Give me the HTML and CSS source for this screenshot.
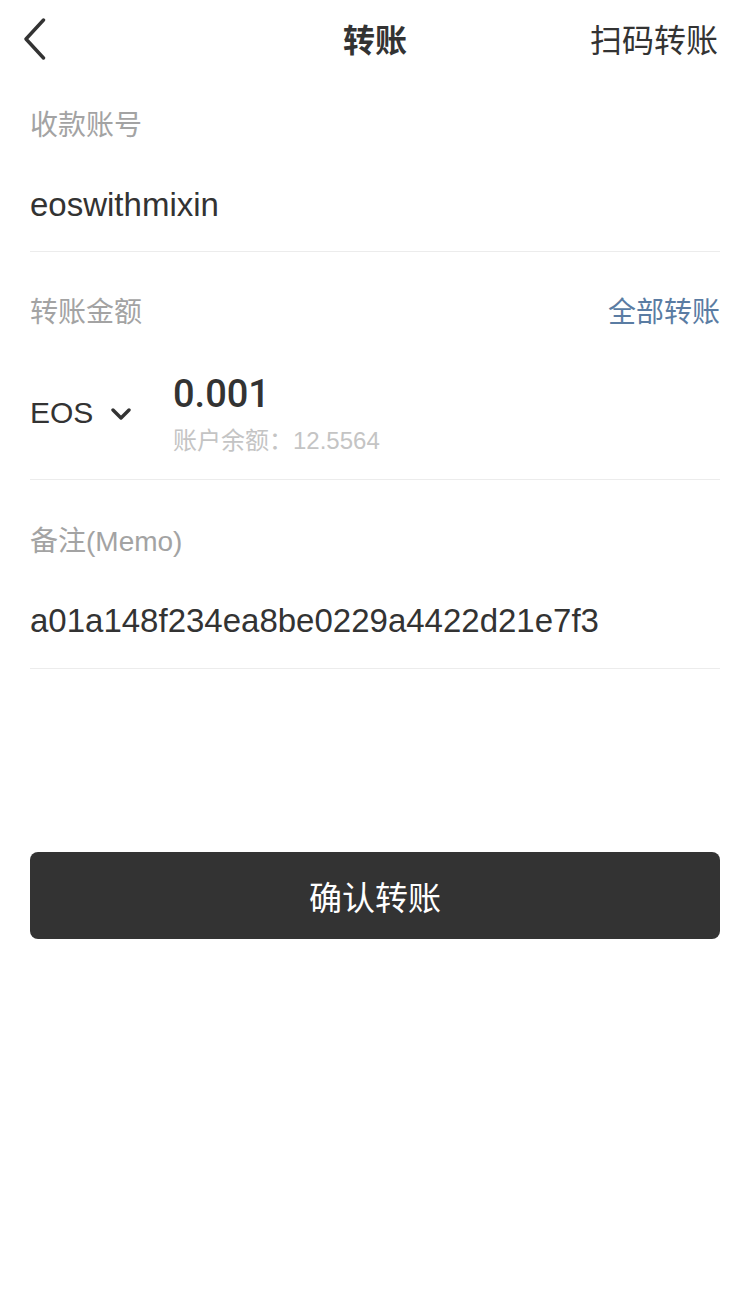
FILE: index.html
```html
<!DOCTYPE html>
<html lang="zh-CN">
<head>
<meta charset="utf-8">
<title>转账</title>
<link rel="stylesheet" href="styles.css">
</head>
<body>
<div class="page">
  <header class="header">
    <span class="back">
      <svg width="24" height="44" viewBox="0 0 24 44"><polyline points="20.5,4 3,23 20.5,42" fill="none" stroke="#333" stroke-width="3.4" stroke-linecap="round" stroke-linejoin="round"/></svg>
    </span>
    <h1 class="title">转账</h1>
    <span class="scan">扫码转账</span>
  </header>

  <section class="field">
    <div class="label-row"><span class="label">收款账号</span></div>
    <div class="value">eoswithmixin</div>
  </section>

  <section class="field">
    <div class="label-row"><span class="label">转账金额</span><span class="link">全部转账</span></div>
    <div class="amount-row">
      <div class="coin">
        <span class="coin-name">EOS</span>
        <svg class="caret" width="20" height="14" viewBox="0 0 20 14"><polyline points="2,3 10,11 18,3" fill="none" stroke="#333" stroke-width="3.4" stroke-linecap="round" stroke-linejoin="round"/></svg>
      </div>
      <div class="amount-col">
        <div class="amount">0.001</div>
        <div class="balance">账户余额：12.5564</div>
      </div>
    </div>
  </section>

  <section class="field memo">
    <div class="label-row"><span class="label">备注(Memo)</span></div>
    <div class="value">a01a148f234ea8be0229a4422d21e7f3</div>
  </section>

  <button class="submit">确认转账</button>
</div>
</body>
</html>
```

FILE: styles.css
```css
html, body {
  margin: 0;
  padding: 0;
  background: #fff;
}
body {
  font-family: "Liberation Sans", "Noto Sans CJK SC", sans-serif;
  color: #333;
}
.page {
  width: 750px;
  display: flex;
  flex-direction: column;
}
.header {
  height: 76px;
  display: flex;
  align-items: center;
  justify-content: space-between;
  padding: 0 32px 0 23px;
  position: relative;
}
.back {
  display: flex;
  align-items: center;
  width: 24px;
  height: 44px;
  margin-top: -1px;
}
.title {
  position: absolute;
  left: 0;
  right: 0;
  top: 0;
  height: 76px;
  margin: 0;
  display: flex;
  align-items: center;
  justify-content: center;
  font-size: 32px;
  font-weight: 700;
  color: #333;
  pointer-events: none;
  font-family: "Noto Sans CJK SC", sans-serif;
}
.scan {
  font-size: 32px;
  line-height: 40px;
  color: #333;
  font-family: "Noto Sans CJK SC", sans-serif;
}
.field {
  margin: 0 30px;
  padding-top: 27px;
  padding-bottom: 24px;
  border-bottom: 1px solid #ececec;
}
.field + .field {
  padding-top: 38px;
  padding-bottom: 23px;
}
.field.memo {
  padding-top: 39px;
  padding-bottom: 25px;
}
.label-row {
  height: 40px;
  display: flex;
  align-items: center;
  justify-content: space-between;
}
.label {
  font-size: 28px;
  color: #a3a3a3;
}
.link {
  font-size: 28px;
  color: #5a7ca3;
  font-family: "Noto Sans CJK SC", sans-serif;
}
.value {
  margin-top: 40px;
  font-size: 33px;
  line-height: 44px;
  color: #333;
}
.amount-row {
  margin-top: 40px;
  display: flex;
  align-items: center;
}
.coin {
  width: 143px;
  display: flex;
  align-items: center;
  gap: 20px;
}
.coin-name {
  font-size: 30px;
  line-height: 40px;
  color: #333;
}
.caret {
  margin-top: 2px;
  margin-left: -2px;
}
.amount-col {
  display: flex;
  flex-direction: column;
  gap: 8px;
}
.amount {
  font-family: "Roboto", "Liberation Sans", sans-serif;
  font-size: 38px;
  line-height: 48px;
  font-weight: 500;
  color: #333;
}
.balance {
  font-size: 24px;
  line-height: 30px;
  color: #c4c4c4;
}
.submit {
  margin: 183px 30px 0;
  height: 87px;
  border: none;
  border-radius: 8px;
  background: #333;
  color: #fff;
  font-size: 33px;
  font-family: "Noto Sans CJK SC", sans-serif;
  padding: 0;
}
```
